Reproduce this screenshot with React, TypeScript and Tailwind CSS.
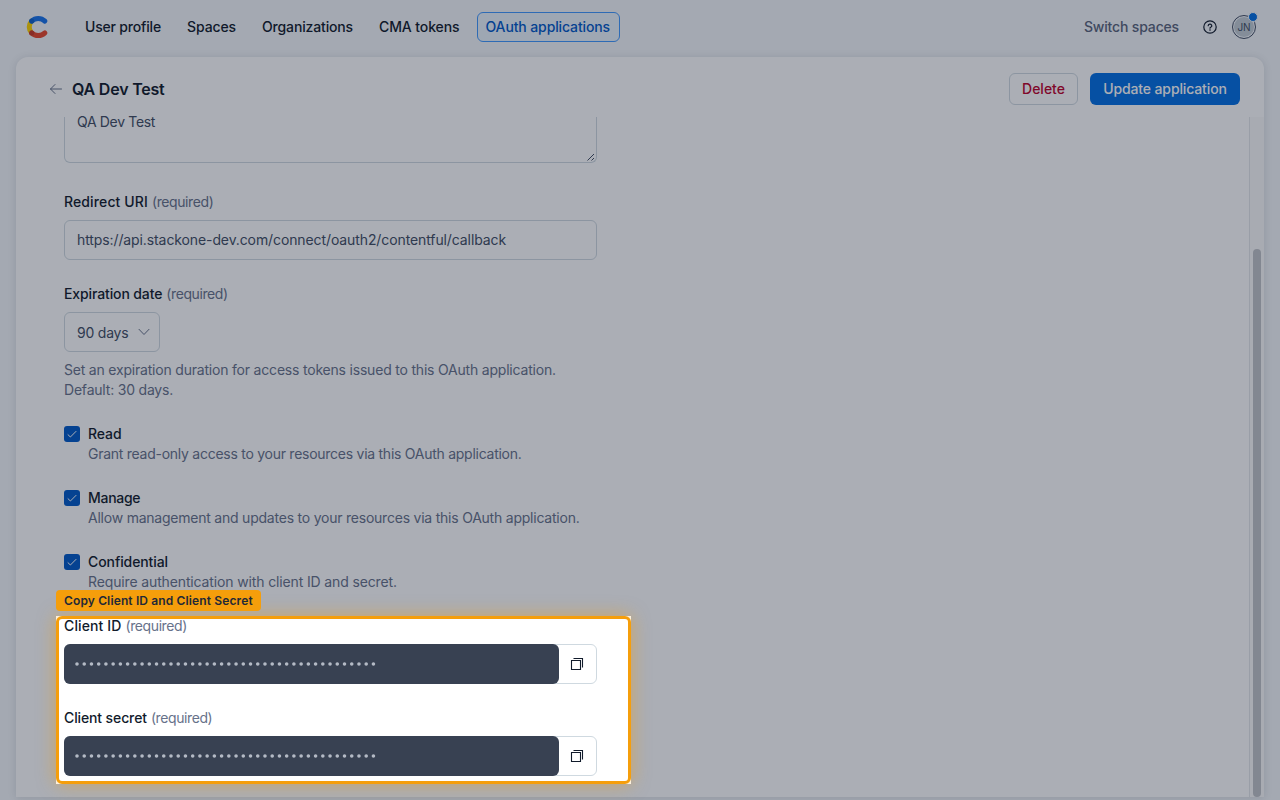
import { clsx } from "clsx";

const navItems = [
  { label: "User profile", className: "ml-[26px] w-[94px] tracking-[-0.18px]" },
  { label: "Spaces", className: "ml-2 w-[67px] tracking-[-0.1px]" },
  { label: "Organizations", className: "ml-2 w-[109px] tracking-[-0.15px]" },
  { label: "CMA tokens", className: "ml-2 w-[98px] tracking-[-0.1px]" },
  { label: "OAuth applications", className: "ml-[8.5px] w-[143px] tracking-[-0.12px]", active: true },
];

const scopes = [
  {
    label: "Read",
    labelClass: "tracking-[-0.1px]",
    help: "Grant read-only access to your resources via this OAuth application.",
    helpClass: "tracking-[-0.262px]",
  },
  {
    label: "Manage",
    labelClass: "tracking-[-0.28px]",
    help: "Allow management and updates to your resources via this OAuth application.",
    helpClass: "tracking-[-0.225px]",
  },
  {
    label: "Confidential",
    labelClass: "tracking-[-0.09px]",
    help: "Require authentication with client ID and secret.",
    helpClass: "tracking-[-0.135px]",
  },
];

const Logo = () => (
  <svg width="24" height="26" viewBox="0 0 24 26" fill="none" strokeLinecap="round" strokeWidth="5">
    <path d="M5.6 18.9A8.6 8.6 0 0 1 5.6 7.1" stroke="#ffd400" />
    <path d="M5.6 7.1A9.6 9.6 0 0 1 18.9 7.1" stroke="#1773eb" />
    <path d="M5.6 18.9A9.6 9.6 0 0 0 18.9 18.9" stroke="#e8482c" />
    <circle cx="5.7" cy="7" r="2.5" fill="#0e62c9" />
    <circle cx="5.7" cy="19" r="2.5" fill="#c93a26" />
  </svg>
);

const Header = () => (
  <header className="flex h-[57px] shrink-0 items-start px-6 pt-3">
    <div className="mt-0.5 ml-0.5 w-6">
      <Logo />
    </div>
    <nav className="flex text-sm font-medium text-[#111b2b]">
      {navItems.map(({ label, className, active }) => (
        <a
          key={label}
          className={clsx(
            "flex h-[30px] items-center rounded-md border pl-2 whitespace-nowrap",
            active ? "border-[#4099ff] bg-[#ebf4fc] text-[#0059c8]" : "border-transparent",
            className
          )}
        >
          {label}
        </a>
      ))}
    </nav>
    <div className="ml-auto flex h-[30px] items-center">
      <span className="mr-[23px] text-sm font-medium tracking-[-0.16px] text-[#5a657c]">Switch spaces</span>
      <svg width="16" height="16" viewBox="0 0 16 16" fill="none" stroke="#111b2b" strokeWidth="1.2">
        <circle cx="8" cy="8" r="6.2" />
        <path d="M6.2 6.7a1.8 1.6 0 1 1 2.5 1.5c-.5.2-.7.5-.7 1" strokeLinecap="round" />
        <circle cx="8" cy="11" r=".8" fill="#111b2b" stroke="none" />
      </svg>
      <div className="relative ml-3.5 flex size-6 items-center justify-center rounded-full border border-[#414d63] p-px">
        <div className="flex size-5 items-center justify-center rounded-full bg-[#c3cdd5] text-[10px] tracking-[-0.2px] text-[#414d63]">
          JN
        </div>
        <span className="absolute -top-1 -right-[3px] size-2.5 rounded-full border border-[#f4f7fa] bg-[#036fe3]" />
      </div>
    </div>
  </header>
);

const Label = ({ text, className }: { text: string; className: string }) => (
  <div className="h-5 text-sm leading-5 whitespace-nowrap">
    <span className={clsx("font-medium text-[#111b2b]", className)}>{text}</span>
    <span className="ml-1 tracking-[-0.4px] text-[#67728a]">(required)</span>
  </div>
);

const Checkbox = () => (
  <span className="mt-0.5 flex size-4 shrink-0 items-center justify-center rounded-[3px] bg-[#0059c8]">
    <svg width="12" height="12" viewBox="0 0 12 12" fill="none" stroke="#fff" strokeLinecap="round" strokeLinejoin="round">
      <path d="M2 6.7 4.4 9 10 3.4" />
    </svg>
  </span>
);

const SecretField = ({ label, className }: { label: string; className: string }) => (
  <div>
    <Label text={label} className={className} />
    <div className="mt-2 flex h-10 rounded-md border border-[#cfd9e0] bg-white">
      <div className="-my-px -ml-px flex w-[494.5px] items-center rounded-md bg-[#384152] pl-[11px]">
        <svg width="306" height="4" viewBox="0 0 306 4" fill="none">
          <path d="M2 2h299" stroke="#b4bac5" strokeWidth="3.6" strokeLinecap="round" strokeDasharray="0 7.23" />
        </svg>
      </div>
      <button className="flex flex-1 items-center justify-center">
        <svg width="16" height="16" viewBox="0 0 16 16" fill="none" stroke="#111b2b" strokeWidth="1.1">
          <path d="M2.5 4.5h9v9h-9zM4.5 2.5h9v9" />
        </svg>
      </button>
    </div>
  </div>
);

const Form = () => (
  <div className="flex w-[533px] flex-col gap-6">
    {/* scrolled: only the lower part of the textarea is in view */}
    <div className="relative h-[46px] rounded-b-md border border-t-0 border-[#cfd9e0] px-3 text-sm leading-[10px] tracking-[-0.33px] text-[#414d63]">
      QA Dev Test
      <svg className="absolute right-0 bottom-0" width="10" height="10" viewBox="0 0 10 10" stroke="#414d63">
        <path d="M1.5 8.5 8 2M5.5 8.5 8 6" />
      </svg>
    </div>
    <div className="mt-[5px]">
      <Label text="Redirect URI" className="tracking-[0.12px]" />
      <div className="mt-2 flex h-10 items-center rounded-md border border-[#cfd9e0] px-3 text-sm tracking-[-0.104px] text-[#414d63]">
        https://api.stackone-dev.com/connect/oauth2/contentful/callback
      </div>
    </div>
    <div>
      <Label text="Expiration date" className="tracking-[-0.12px]" />
      <div className="mt-2 flex h-10 w-24 items-center rounded-md border border-[#cfd9e0] pt-0.5 pl-3 text-sm tracking-[-0.22px] text-[#414d63]">
        90 days
        <svg className="-mt-0.5 ml-2.5 shrink-0" width="12" height="12" viewBox="0 0 12 12" fill="none" stroke="#67728a" strokeLinecap="round" strokeLinejoin="round">
          <path d="M1 3.3 6 8.5l5-5.2" />
        </svg>
      </div>
      <p className="mt-2 text-sm leading-5 whitespace-nowrap tracking-[-0.2px] text-[#67728a]">
        Set an expiration duration for access tokens issued to this OAuth application.
        <br />
        Default: 30 days.
      </p>
    </div>
    {scopes.map((s) => (
      <div key={s.label} className="flex gap-2 text-sm leading-5 whitespace-nowrap">
        <Checkbox />
        <div>
          <div className={clsx("font-medium text-[#111b2b]", s.labelClass)}>{s.label}</div>
          <div className={clsx("text-[#67728a]", s.helpClass)}>{s.help}</div>
        </div>
      </div>
    ))}
    <SecretField label="Client ID" className="tracking-[0.12px]" />
    <SecretField label="Client secret" className="tracking-[-0.12px]" />
  </div>
);

const Highlight = () => (
  <>
    <div className="pointer-events-none absolute top-[616px] left-14 h-[168px] w-[574.5px] shadow-[0_0_0_2000px_rgba(15,23,42,0.35)]" />
    <div className="pointer-events-none absolute top-[616px] left-14 h-[168px] w-[574.5px] rounded-md border-3 border-[#f59e0b] shadow-[0_0_18px_rgba(245,158,11,0.5)]" />
    <div className="absolute top-[590px] left-14 flex h-[21px] w-[205px] items-center rounded bg-[#f59e0b] pl-2 text-xs font-semibold whitespace-nowrap tracking-[0.13px] text-[#1f2937]">
      Copy Client ID and Client Secret
    </div>
  </>
);

export default function App() {
  return (
    <div className="relative flex h-[800px] w-[1280px] flex-col overflow-hidden bg-[#f4f7fa] font-['Inter','Liberation_Sans',sans-serif]">
      <Header />
      <main className="mx-4 flex h-[740px] flex-col rounded-t-xl bg-white shadow-[0_1px_8px_rgba(17,27,43,0.12)]">
        <div className="flex h-[60px] shrink-0 items-center pt-1 pr-6 pl-[33px]">
          <svg width="14" height="12" viewBox="0 0 14 12" fill="none" stroke="#67728a" strokeLinecap="round" strokeLinejoin="round">
            <path d="M12.5 6H1.5M6 1.5 1.5 6 6 10.5" />
          </svg>
          <h1 className="ml-[9px] text-base font-semibold tracking-[-0.2px] text-[#111b2b]">QA Dev Test</h1>
          <button className="ml-auto h-8 w-[69px] rounded-md border border-[#cfd9e0] text-sm font-medium text-[#bd002a]">
            Delete
          </button>
          <button className="ml-3 h-8 w-[150px] rounded-md bg-[#036fe3] text-sm font-medium tracking-[-0.13px] text-white">
            Update application
          </button>
        </div>
        <div className="flex flex-1 pl-12">
          <Form />
          <div className="ml-auto w-[15px] border-l border-[#e3e6ea] bg-[#fafafa] pt-[132px] pl-[3px]">
            <div className="h-[548px] w-2 rounded-full bg-[#c1c3c8]" />
          </div>
        </div>
      </main>
      <Highlight />
    </div>
  );
}
